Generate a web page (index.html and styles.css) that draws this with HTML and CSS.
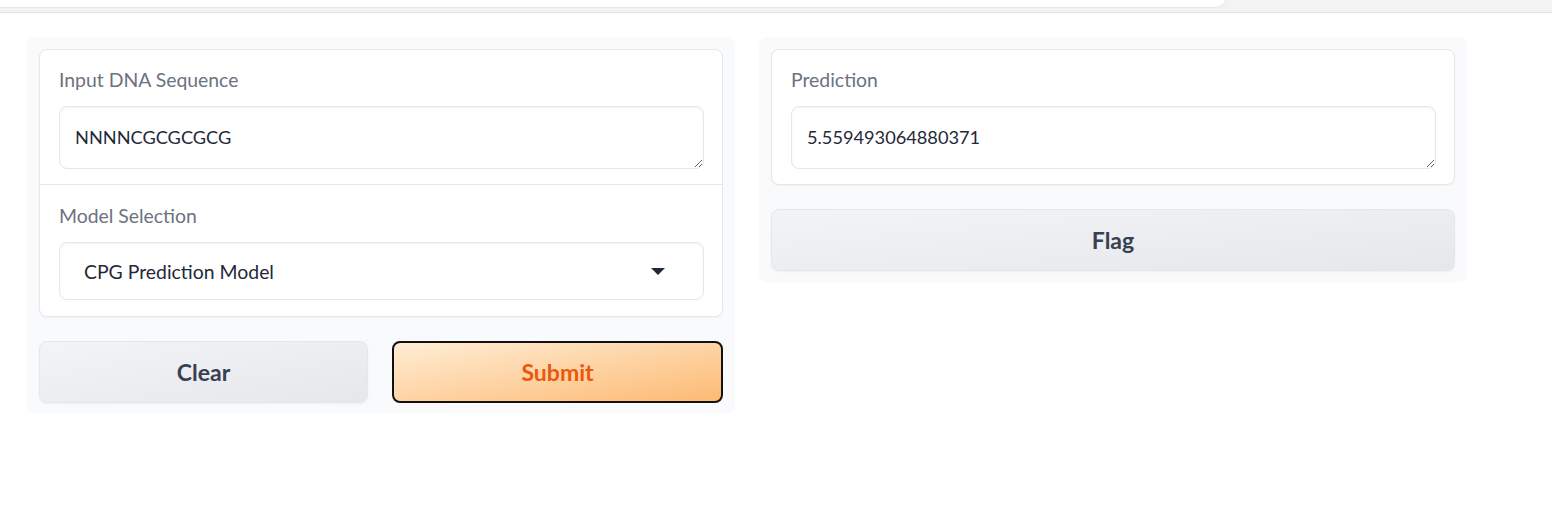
FILE: index.html
```html
<!DOCTYPE html>
<html>
<head>
<meta charset="utf-8">
<link rel="stylesheet" href="styles.css">
</head>
<body>
<div class="topbar"><div class="tab"></div></div>
<main class="app">
  <section class="panel">
    <div class="card">
      <div class="field">
        <span class="label">Input DNA Sequence</span>
        <textarea class="textbox" rows="1">NNNNCGCGCGCG</textarea>
      </div>
      <div class="field field-second">
        <span class="label">Model Selection</span>
        <div class="select">
          <span>CPG Prediction Model</span>
          <svg class="caret" width="14" height="8" viewBox="0 0 14 8"><path d="M0 0 H14 L7 7 Z" fill="#1f2937"/></svg>
        </div>
      </div>
    </div>
    <div class="buttons">
      <button class="btn btn-secondary">Clear</button>
      <button class="btn btn-primary">Submit</button>
    </div>
  </section>
  <section class="panel">
    <div class="card">
      <div class="field">
        <span class="label">Prediction</span>
        <textarea class="textbox" rows="1">5.559493064880371</textarea>
      </div>
    </div>
    <div class="buttons">
      <button class="btn btn-secondary">Flag</button>
    </div>
  </section>
</main>
</body>
</html>
```
FILE: styles.css
```css
* { box-sizing: border-box; }
body {
  margin: 0;
  background: #ffffff;
  font-family: "Lato", "Liberation Sans", sans-serif;
}
.topbar {
  height: 13px;
  background: #f3f3f3;
  border-bottom: 1px solid #e2e2e2;
}
.tab {
  width: 1226px;
  height: 8px;
  background: #ffffff;
  border-bottom: 1px solid #e8e8e8;
  border-right: 1px solid #e8e8e8;
  border-bottom-right-radius: 12px 8px;
}
.app {
  display: flex;
  align-items: flex-start;
  gap: 24px;
  padding: 24px 0 0 27px;
}
.panel {
  width: 708px;
  background: #f9fafb;
  border-radius: 8px;
  padding: 12px 12px 11px;
  display: flex;
  flex-direction: column;
  gap: 24px;
}
.card {
  background: #ffffff;
  border: 1px solid #e5e7eb;
  border-radius: 8px;
  box-shadow: 0 1px 2px rgba(0,0,0,0.04);
}
.field {
  display: flex;
  flex-direction: column;
  padding: 19px 18px 15px 19px;
}
.field-second {
  border-top: 1px solid #e5e7eb;
  padding-top: 20px;
  padding-bottom: 16px;
}
.label {
  font-size: 19.4px;
  line-height: 22px;
  color: #6b7280;
  margin-bottom: 15px;
}
.textbox {
  display: block;
  width: 100%;
  height: 63px;
  border: 1px solid #e5e7eb;
  border-radius: 8px;
  box-shadow: inset 0 1px 3px rgba(0,0,0,0.05);
  padding: 19px 15px;
  font-family: inherit;
  font-size: 18.2px;
  line-height: 22px;
  color: #1f2937;
  resize: vertical;
  outline: none;
  background: #ffffff;
}
.select {
  height: 58px;
  border: 1px solid #e5e7eb;
  border-radius: 8px;
  box-shadow: inset 0 1px 3px rgba(0,0,0,0.05);
  display: flex;
  align-items: center;
  justify-content: space-between;
  padding: 0 38px 0 24px;
  font-size: 19.4px;
  color: #1f2937;
}
.caret { display: block; margin-top: 2px; }
.buttons {
  display: flex;
  gap: 24px;
}
.btn {
  flex: 1;
  height: 62px;
  border-radius: 8px;
  font-family: inherit;
  font-size: 23px;
  font-weight: 700;
  cursor: pointer;
}
.btn-secondary {
  background: linear-gradient(to bottom right, #f3f4f6, #e5e7eb);
  border: 1px solid #e5e7eb;
  color: #374151;
  box-shadow: 0 1px 2px rgba(0,0,0,0.05);
}
.btn-primary {
  background: linear-gradient(to bottom right, #ffedd5, #fdba74);
  border: 2px solid #111111;
  color: #ea580c;
}
```
